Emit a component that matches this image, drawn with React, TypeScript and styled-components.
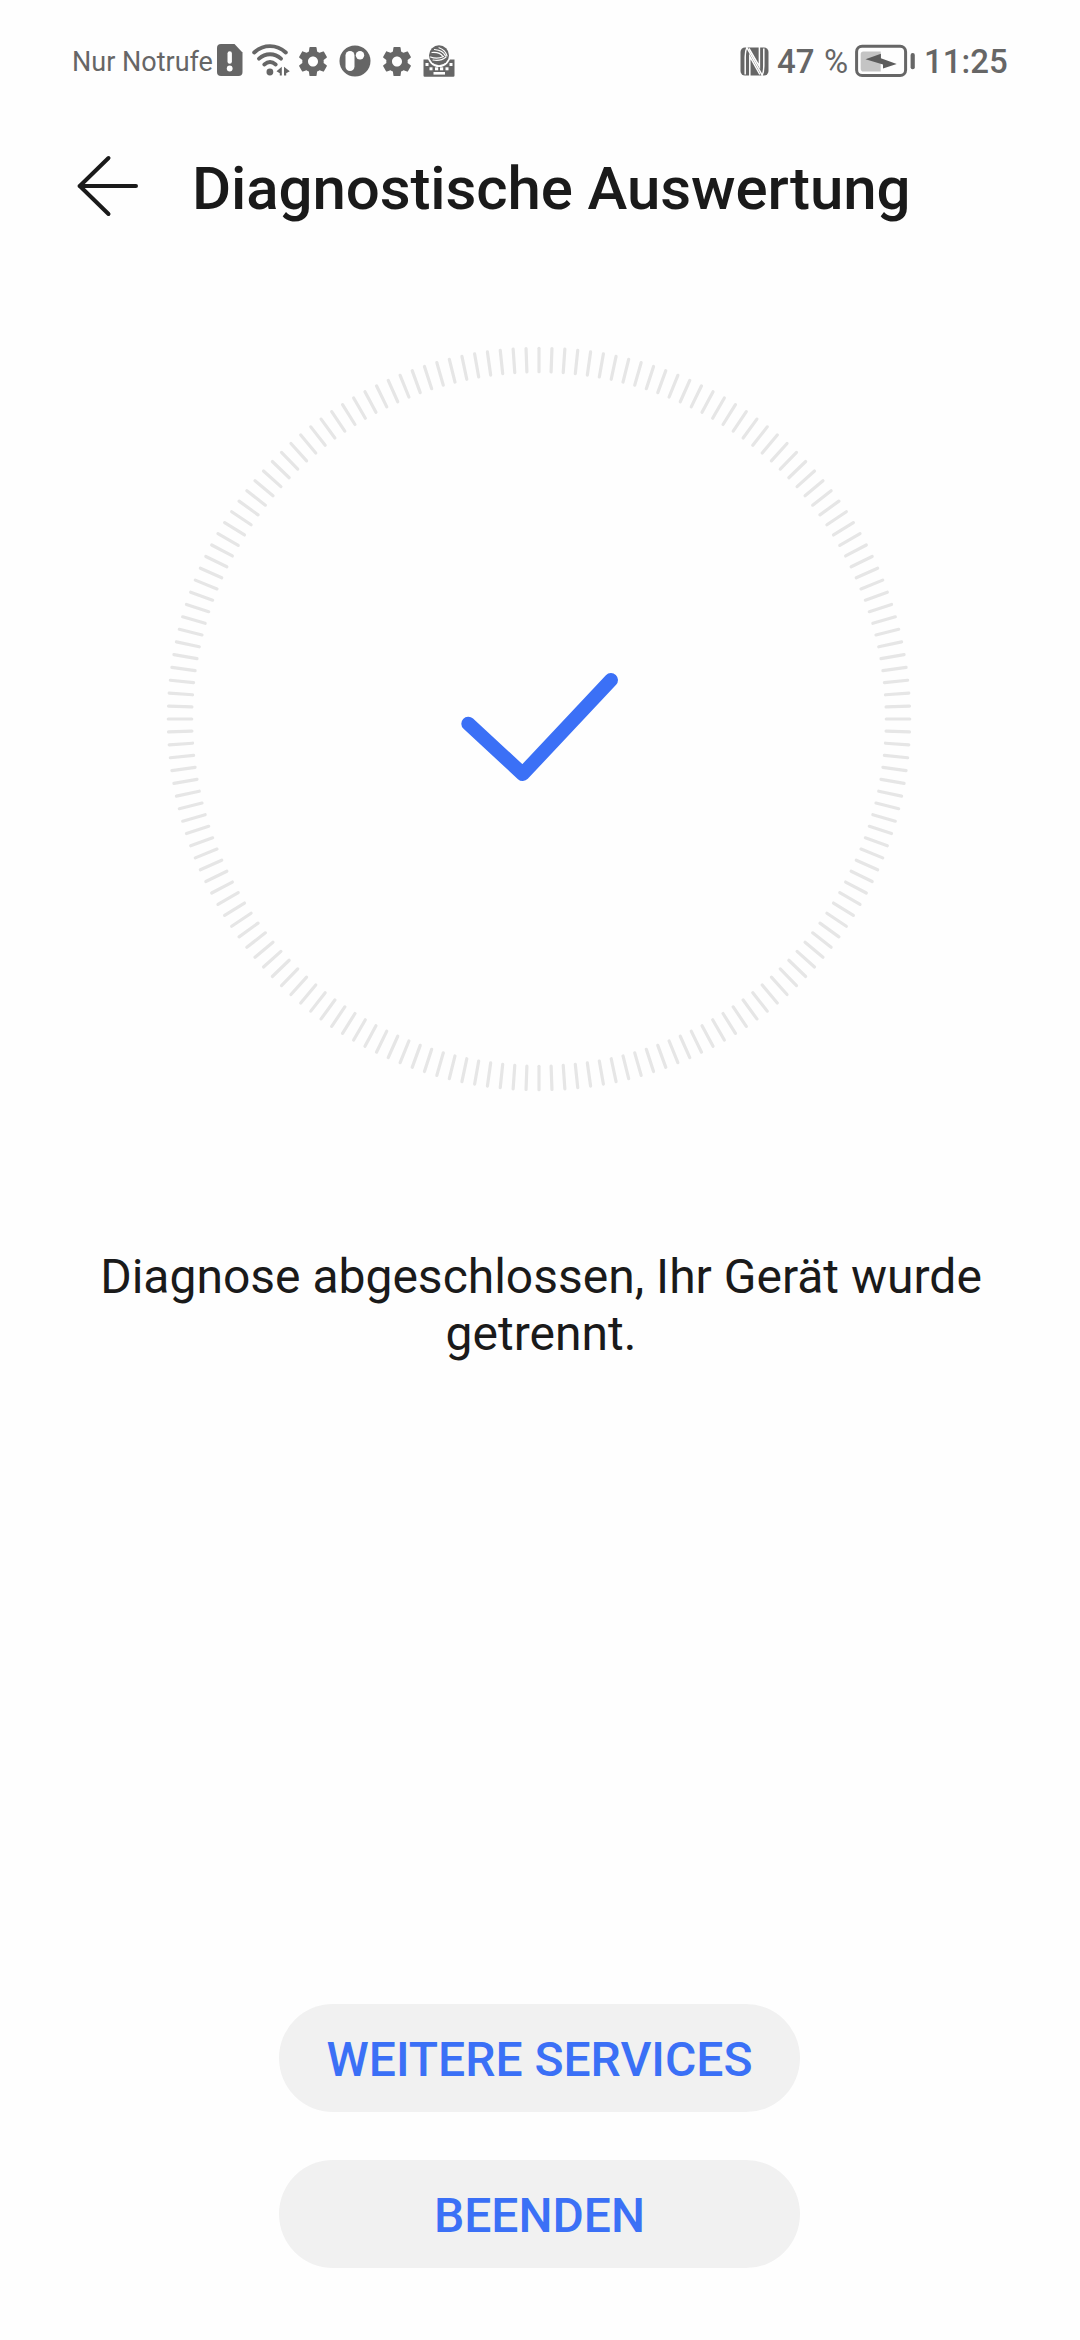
import React from "react";
import styled, { createGlobalStyle } from "styled-components";

const GREY = "#666666";
const INK = "#1a1a1a";
const BLUE = "#3b70f6";
const PAGE = "#fefefe";

const GlobalStyle = createGlobalStyle`
  * { box-sizing: border-box; }
  html, body { margin: 0; padding: 0; background: ${PAGE}; }
  body { font-family: Roboto, "Noto Sans", sans-serif; color: ${INK}; }
`;

const Screen = styled.div`
  width: 1080px;
  height: 2340px;
  display: flex;
  flex-direction: column;
  background: ${PAGE};
  overflow: hidden;
`;

const StatusBar = styled.header`
  height: 122px;
  padding: 0 70px 0 72px;
  display: flex;
  justify-content: space-between;
  align-items: center;
  color: ${GREY};
`;

const StatusGroup = styled.div`
  display: flex;
  align-items: center;
  height: 40px;
`;

const StatusText = styled.span<{ $size: number; $width: number; $gap?: number; $weight?: number }>`
  flex: none;
  width: ${(p) => p.$width}px;
  margin: 2px 0 0 ${(p) => p.$gap ?? 0}px;
  font-size: ${(p) => p.$size}px;
  font-weight: ${(p) => p.$weight ?? 400};
  line-height: 40px;
  white-space: nowrap;
`;

const Glyph = styled.svg<{ $gap: number; $lift?: number }>`
  display: block;
  flex: none;
  margin: 0 0 ${(p) => p.$lift ?? 0}px ${(p) => p.$gap}px;
`;

const TitleBar = styled.div`
  height: 128px;
  padding-left: 76px;
  display: flex;
  align-items: center;
`;

const BackButton = styled.button`
  width: 64px;
  height: 128px;
  padding: 0;
  border: 0;
  background: none;
  display: flex;
  align-items: center;
`;

const Title = styled.h1`
  margin: 6px 0 0 52px;
  font-size: 60px;
  line-height: 72px;
  font-weight: 500;
  letter-spacing: -0.1px;
  white-space: nowrap;
`;

const Result = styled.main`
  flex: 1;
  display: flex;
  flex-direction: column;
  align-items: center;
  padding-top: 94px;
`;

const Dial = styled.svg`
  display: block;
  width: 750px;
  height: 750px;
  margin-right: 2px;
`;

const Message = styled.p`
  width: 936px;
  margin: 154px 0 0;
  padding-left: 2px;
  font-size: 48px;
  line-height: 57px;
  text-align: center;
`;

const Actions = styled.footer`
  display: flex;
  flex-direction: column;
  align-items: center;
  gap: 48px;
  padding: 0 1px 72px 0;
`;

const ActionButton = styled.button`
  width: 521px;
  height: 108px;
  padding: 4px 0 0;
  border: 0;
  border-radius: 54px;
  background: #f1f1f1;
  color: ${BLUE};
  font: 500 48px/56px Roboto, "Noto Sans", sans-serif;
  white-space: nowrap;
`;

const SimAlertIcon = () => (
  <Glyph $gap={5} $lift={2} width="26" height="32" viewBox="0 0 26 32">
    <path d="M4 0h13.500l8 8.500V28a4 4 0 0 1-4 4H4a4 4 0 0 1-4-4V4a4 4 0 0 1 4-4z" fill={GREY} />
    <path d="M12.700 9.500v8" stroke={PAGE} strokeWidth="4.400" strokeLinecap="round" />
    <circle cx="12.700" cy="24.500" r="2.900" fill={PAGE} />
  </Glyph>
);

const WifiIcon = () => (
  <Glyph $gap={9} $lift={2} width="38" height="32" viewBox="0 0 38 32">
    <g fill="none" stroke={GREY} strokeWidth="3.900" strokeLinecap="round">
      <path d="M2.200 8.500C11.500 0 24.500 0 33.800 8.500" />
      <path d="M7 14.600C13.500 8.800 22.500 8.800 29 14.600" />
      <path d="M12.300 20.400C16 17.300 20 17.300 23.700 20.400" />
    </g>
    <circle cx="17.900" cy="28" r="3.400" fill={GREY} />
    <path d="M29.800 22.800v8.600h-2v-2.200l-3.300-2 5.300-4.400zM32 22.800l5.800 4.400-3.600 2v2.200H32z" fill={GREY} />
  </Glyph>
);

const GearIcon = ({ gap }: { gap: number }) => (
  <Glyph $gap={gap} width="28" height="29" viewBox="2.200 2 19.600 20" preserveAspectRatio="none">
    <path
      fill={GREY}
      d="M19.430 12.980c.04-.32.07-.64.07-.98s-.03-.66-.07-.98l2.110-1.650c.19-.15.24-.42.12-.64l-2-3.460c-.12-.22-.39-.3-.61-.22l-2.490 1c-.52-.4-1.080-.73-1.690-.98l-.38-2.650C14.460 2.180 14.250 2 14 2h-4c-.25 0-.46.18-.49.42l-.38 2.650c-.61.25-1.170.59-1.690.98l-2.490-1c-.23-.09-.49 0-.61.22l-2 3.460c-.13.22-.07.49.12.64l2.110 1.650c-.04.32-.07.65-.07.98s.03.66.07.98l-2.110 1.650c-.19.15-.24.42-.12.64l2 3.460c.12.22.39.3.61.22l2.490-1c.52.4 1.080.73 1.690.98l.38 2.650c.03.24.24.42.49.42h4c.25 0 .46-.18.49-.42l.38-2.650c.61-.25 1.170-.59 1.690-.98l2.490 1c.23.09.49 0 .61-.22l2-3.460c.12-.22.07-.49-.12-.64l-2.110-1.650zM12 15.500c-1.930 0-3.500-1.570-3.500-3.500s1.570-3.500 3.500-3.500 3.500 1.570 3.500 3.500-1.570 3.500-3.500 3.500z"
    />
  </Glyph>
);

const DiscIcon = () => (
  <Glyph $gap={12} width="32" height="32" viewBox="0 0 32 32">
    <circle cx="16" cy="16" r="15.500" fill={GREY} />
    <rect x="6.500" y="6" width="9" height="20" rx="4.500" fill={PAGE} />
    <circle cx="21" cy="10.300" r="4.200" fill={PAGE} />
  </Glyph>
);

const KeyboardIcon = () => (
  <Glyph $gap={12} width="32" height="32" viewBox="0 0 32 32">
    <path d="M0.500 14.500h31v16a1.200 1.200 0 0 1-1.200 1.200H1.700a1.200 1.200 0 0 1-1.200-1.200z" fill={GREY} />
    <circle cx="16" cy="10.500" r="11.500" fill={PAGE} />
    <g fill={PAGE}>
      <rect x="2.500" y="18" width="3" height="3" />
      <rect x="26.500" y="18" width="3" height="3" />
      <rect x="6.500" y="22.300" width="3" height="3" />
      <rect x="12" y="22.300" width="3.200" height="3" />
      <rect x="17" y="22.300" width="3.200" height="3" />
      <rect x="22.500" y="22.300" width="3" height="3" />
      <rect x="10.500" y="27" width="11.500" height="2.600" />
    </g>
    <circle cx="16" cy="10.200" r="10" fill={GREY} />
    <g fill="none" stroke={PAGE} strokeWidth="1.200" strokeLinecap="round">
      <path d="M9 7.500c6-.5 9 1 11 4M11.500 4.500c5.500.5 9.500 3 11 6.500M16 2.800c4 1.500 7 4.500 8 8" />
      <path d="M7.500 12c4 1.500 9 1.500 13-.5M10 15c5 1 9.500 0 13-3" />
    </g>
  </Glyph>
);

const NfcIcon = () => (
  <Glyph $gap={0} width="29" height="29" viewBox="0 0 29 29">
    <rect x="0.500" y="0.500" width="28" height="28" rx="4.500" fill={GREY} />
    <path d="M7.200 0c-1.700 3-2 6-2 10v17.500M7.200 1.200L22 27.800M21.800 29c1.700-3 2-6 2-10V1.500" fill="none" stroke={PAGE} strokeWidth="1.500" />
    <path d="M9.800 29V9.500l10 18M19.400 0v19.500L9 1.500" fill="none" stroke={PAGE} strokeWidth="1.500" />
  </Glyph>
);

const BatteryIcon = () => (
  <Glyph $gap={7} width="61" height="34" viewBox="0 0 61 34">
    <rect x="1.600" y="2.300" width="49" height="29.300" rx="5.500" fill="none" stroke={GREY} strokeWidth="3" />
    <path d="M8.500 7.500h17.200v20H8.500a2.800 2.800 0 0 1-2.800-2.800v-14.400a2.800 2.800 0 0 1 2.800-2.800z" fill="#c4c4c4" />
    <path d="M10.500 15.300L25.900 9.800v4.500L41.700 20 28 24.600v-4.200z" fill="#5c5c5c" />
    <rect x="55.600" y="9" width="4.200" height="16.200" rx="2" fill={GREY} />
  </Glyph>
);

const BackArrow = () => (
  <svg width="64" height="64" viewBox="0 0 64 64">
    <path d="M60 32H3.500M32.500 4L3.800 32 32.500 60" fill="none" stroke={INK} strokeWidth="4" strokeLinecap="round" strokeLinejoin="round" />
  </svg>
);

const TICKS = Array.from({ length: 180 }, (_, i) => i * 2);

const App: React.FC = () => (
  <>
    <GlobalStyle />
    <Screen>
      <StatusBar>
        <StatusGroup>
          <StatusText $size={27} $width={140}>Nur Notrufe</StatusText>
          <SimAlertIcon />
          <WifiIcon />
          <GearIcon gap={9} />
          <DiscIcon />
          <GearIcon gap={12} />
          <KeyboardIcon />
        </StatusGroup>
        <StatusGroup>
          <NfcIcon />
          <StatusText $size={33} $width={36} $gap={8} $weight={500}>47</StatusText>
          <StatusText $size={33} $width={24} $gap={11}>%</StatusText>
          <BatteryIcon />
          <StatusText $size={33} $width={86} $gap={8} $weight={500}>11:25</StatusText>
        </StatusGroup>
      </StatusBar>

      <TitleBar>
        <BackButton aria-label="Zurück">
          <BackArrow />
        </BackButton>
        <Title>Diagnostische Auswertung</Title>
      </TitleBar>

      <Result>
        <Dial viewBox="-375 -375 750 750">
          <g stroke="#e6e6e6" strokeWidth="3.200" strokeLinecap="round">
            {TICKS.map((angle) => (
              <line key={angle} x1="0" y1="-370.700" x2="0" y2="-347.300" transform={`rotate(${angle})`} />
            ))}
          </g>
          <path d="M-70.700 4.700L-16.300 55 72-39" fill="none" stroke={BLUE} strokeWidth="14" strokeLinecap="round" strokeLinejoin="round" />
        </Dial>
        <Message>Diagnose abgeschlossen, Ihr Gerät wurde getrennt.</Message>
      </Result>

      <Actions>
        <ActionButton>WEITERE SERVICES</ActionButton>
        <ActionButton>BEENDEN</ActionButton>
      </Actions>
    </Screen>
  </>
);

export default App;
